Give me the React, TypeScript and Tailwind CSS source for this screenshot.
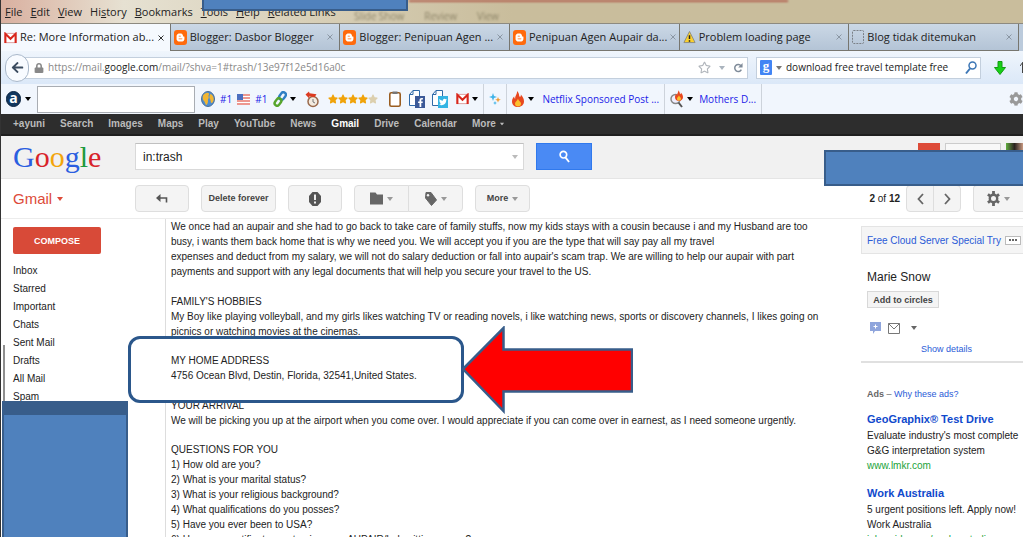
import React from "react";
import {
  FaArrowLeft,
  FaBloggerB,
  FaCog,
  FaFacebookF,
  FaFolder,
  FaLock,
  FaRegStar,
  FaStar,
  FaTag,
  FaTwitter,
} from "react-icons/fa";

const menuItems = [
  { before: "", key: "F", after: "ile" },
  { before: "", key: "E", after: "dit" },
  { before: "", key: "V", after: "iew" },
  { before: "Hi", key: "s", after: "tory" },
  { before: "", key: "B", after: "ookmarks" },
  { before: "", key: "T", after: "ools" },
  { before: "", key: "H", after: "elp" },
  { before: "", key: "R", after: "elated Links" },
];

const googleLinks = [
  "+ayuni",
  "Search",
  "Images",
  "Maps",
  "Play",
  "YouTube",
  "News",
  "Gmail",
  "Drive",
  "Calendar",
];

const folders = [
  "Inbox",
  "Starred",
  "Important",
  "Chats",
  "Sent Mail",
  "Drafts",
  "All Mail",
  "Spam",
];

const Caret: React.FC<{ className?: string }> = ({ className = "" }) => (
  <svg
    viewBox="0 0 6 4"
    className={`w-[6px] h-1 shrink-0 ${className}`}
    fill="currentColor"
  >
    <path d="M0 0h6L3 4z" />
  </svg>
);

const GmailIcon: React.FC = () => (
  <svg viewBox="0 0 14 12" className="w-[13px] h-3 shrink-0">
    <rect x="1" y="1" width="12" height="10" fill="#fff" stroke="#d99" />
    <path
      d="M1.5 11.5V1.5L7 6.8l5.5-5.3v10"
      fill="none"
      stroke="#d9271c"
      strokeWidth="2.2"
    />
  </svg>
);

const BloggerIcon: React.FC = () => (
  <span className="w-[13px] h-[15px] shrink-0 rounded-[3px] bg-[#ff6a0c] text-white flex items-center justify-center">
    <FaBloggerB size={9} />
  </span>
);

const WarningIcon: React.FC = () => (
  <svg viewBox="0 0 14 14" className="w-[13px] h-[14px] shrink-0">
    <path
      d="M7 1 13 13H1z"
      fill="#fbd02c"
      stroke="#8b8b80"
      strokeLinejoin="round"
    />
    <path d="M7 5v4.2M7 10.4v1.6" stroke="#222" strokeWidth="1.6" />
  </svg>
);

const BlankIcon: React.FC = () => (
  <svg viewBox="0 0 12 14" className="w-3 h-[14px] shrink-0">
    <rect
      x="0.5"
      y="0.5"
      width="11"
      height="13"
      rx="1"
      fill="none"
      stroke="#7b8087"
      strokeDasharray="2 1"
    />
  </svg>
);

const tabs = [
  { title: "Re: More Information ab...", icon: <GmailIcon />, active: true },
  { title: "Blogger: Dasbor Blogger", icon: <BloggerIcon /> },
  { title: "Blogger: Penipuan Agen ...", icon: <BloggerIcon /> },
  { title: "Penipuan Agen Aupair da...", icon: <BloggerIcon /> },
  { title: "Problem loading page", icon: <WarningIcon /> },
  { title: "Blog tidak ditemukan", icon: <BlankIcon /> },
];

const MenuBar: React.FC = () => (
  <div className="relative h-[23px] flex items-center bg-linear-to-r from-[#d9b0a0] via-[#e6e1d2] via-12% to-[#c9bd9c] to-50% overflow-hidden">
    <div className="absolute top-0 left-[408px] right-[23%] h-[2px] bg-[#b0604f] blur-[1px]" />
    <div className="absolute top-2 left-[353px] flex gap-5 text-[10px] leading-4 text-[#8d8468] blur-[1px]">
      <span>Slide Show</span>
      <span>Review</span>
      <span>View</span>
    </div>
    <nav className="relative flex gap-2 pl-1 text-[11px] leading-4 text-[#222]">
      {menuItems.map((m) => (
        <button key={m.key} className="whitespace-nowrap">
          {m.before}
          <span className="underline">{m.key}</span>
          {m.after}
        </button>
      ))}
    </nav>
    <div className="absolute top-0 left-[201px] w-[206px] h-[11px] bg-[#4f81bd] border-2 border-t-0 border-[#385d8a]" />
  </div>
);

const TabBar: React.FC = () => (
  <div className="grid grid-cols-6 pr-1 h-7 bg-[#bccbdc] border-t border-[#8d8a80]">
    {tabs.map((t) => (
      <button
        key={t.title}
        className={`flex items-center gap-[3px] min-w-0 pl-[3px] pr-[6px] text-[11px] text-[#222] border-r border-[#77766f] ${
          t.active
            ? "bg-[#f5f9fe]"
            : "bg-linear-to-b from-[#cbd8e6] to-[#b4c4d6] border-b"
        }`}
      >
        {t.icon}
        <span className="flex-1 text-left whitespace-nowrap">{t.title}</span>
        <svg
          viewBox="0 0 6 6"
          className={`w-[6px] h-[6px] shrink-0 ${
            t.active ? "text-[#333]" : "text-[#8a96a3]"
          }`}
        >
          <path d="M.5.5l5 5M5.5.5l-5 5" stroke="currentColor" />
        </svg>
      </button>
    ))}
  </div>
);

const AddressBar: React.FC = () => (
  <div className="h-[33px] flex items-center pl-1 bg-linear-to-b from-[#eff5fc] to-[#dbe8f8]">
    <button
      aria-label="Back"
      className="relative z-10 w-6 h-7 shrink-0 rounded-full border border-[#a9b8ca] bg-[#f8fbff] text-[#3b4c60] flex items-center justify-center"
    >
      <FaArrowLeft size={13} />
    </button>
    <div className="-ml-1 pl-2 pr-1 h-[22px] flex-1 min-w-0 flex items-center gap-1 bg-white border border-[#c3cfdd] text-[#888]">
      <FaLock size={10} className="shrink-0" />
      <div className="flex-1 text-[10px] whitespace-nowrap">
        https://mail.<span className="text-[#222]">google.com</span>
        /mail/?shva=1#trash/13e97f12e5d16a0c
      </div>
      <FaRegStar size={13} className="text-[#b0b5bb]" />
      <Caret className="mx-1 text-[#aab4be]" />
      <svg viewBox="0 0 12 12" className="w-[10px] h-3">
        <path
          d="M10 8a4.2 4.2 0 1 1-.4-4.6"
          fill="none"
          stroke="#7f8b99"
          strokeWidth="1.8"
        />
        <path d="M11.5 0v5.5H6.2z" fill="#7f8b99" />
      </svg>
    </div>
    <label className="ml-2 px-[3px] h-[22px] w-[225px] shrink-0 flex items-center gap-1 bg-white border border-[#c3cfdd]">
      <span className="w-3 h-[15px] bg-[#4285f4] rounded-[1px] text-white font-bold text-[13px] leading-[12px] text-center font-['Liberation_Serif',serif]">
        g
      </span>
      <Caret className="text-[#777]" />
      <input
        aria-label="Search the web"
        defaultValue="download free travel template free"
        className="flex-1 min-w-0 text-[10px] text-[#222] outline-none"
      />
      <svg viewBox="0 0 12 14" className="w-3 h-[14px]">
        <circle
          cx="7.5"
          cy="4.5"
          r="3.5"
          fill="none"
          stroke="#3c76b5"
          strokeWidth="1.5"
        />
        <path d="M5 7.5 1 12.5" stroke="#3c76b5" strokeWidth="2" />
      </svg>
    </label>
    <div className="w-[42px] shrink-0 flex items-center justify-between pl-[13px] overflow-hidden">
      <svg viewBox="0 0 12 14" className="w-3 h-[14px]">
        <path
          d="M4 .5h4v6h3.5L6 13.5.5 6.5H4z"
          fill="#17d017"
          stroke="#129c12"
        />
      </svg>
      <svg viewBox="0 0 3 12" className="w-[3px] h-3">
        <path d="M0 4l3-4M2.5 1v10" stroke="#444" />
      </svg>
    </div>
  </div>
);

const Flame: React.FC<{ className?: string }> = ({ className = "" }) => (
  <svg viewBox="0 0 12 16" className={`shrink-0 ${className}`}>
    <path
      d="M5 0c3 3 1.5 5 3 6 .8-.3 1-1.5.8-2.4C11 6 12 8 12 10.5c0 3-2.5 5.5-6 5.5s-6-2-6-5.5C0 8 1.2 6.5 2.2 5.5c0 1.5.4 2 1 2.2C3 4.5 5.5 3 5 0z"
      fill="#e8481f"
    />
    <path
      d="M6 7.5c.3 2.5 3 3 3 5.3 0 1.7-1.3 2.7-3 2.7s-3-1-3-2.8C3 10.5 5.5 10 6 7.5z"
      fill="#fbc02d"
    />
  </svg>
);

const PageIcon: React.FC<{ children: React.ReactNode; badge: string }> = ({
  children,
  badge,
}) => (
  <span className="relative w-4 h-[18px] shrink-0">
    <svg viewBox="0 0 16 18" className="w-4 h-[18px]">
      <path
        d="M.5 4.5 4 .5h6.5v15H.5zM4 .5v4H.5"
        fill="#fff"
        stroke="#2f6aa8"
      />
    </svg>
    <span
      className={`absolute right-0 bottom-0 w-[10px] h-3 text-white flex items-center justify-center ${badge}`}
    >
      {children}
    </span>
  </span>
);

const AlexaBar: React.FC = () => (
  <div className="h-[30px] flex items-center pl-[5px] bg-[#f1f6fd] text-[10px] text-[#1c1ce8] overflow-hidden">
    <span className="w-[15px] h-4 shrink-0 rounded-full bg-[#12375f] border border-[#0a2340] text-white text-[14px] leading-[12px] font-bold text-center">
      a
    </span>
    <Caret className="ml-1 text-black" />
    <input
      aria-label="Alexa search"
      className="ml-[6px] w-[158px] h-[27px] shrink-0 bg-white border border-[#a9adb3]"
    />
    <svg viewBox="0 0 14 16" className="ml-[6px] w-[14px] h-4 shrink-0">
      <ellipse cx="7" cy="8" rx="6.5" ry="7.5" fill="#4f8ccf" stroke="#4a6f96" />
      <path
        d="M2 4.5C4 1.5 7 1 8 2.5 8.5 4 7 4 7.5 5.5 8.5 7 6.5 8 7 10c0 2-1 4-2 4C4 12 4 11 3 10 1.500 9 1.500 6 2 4.500zM9.500 3c2 .5 3.200 3 3.200 5S11.500 12 10.500 12 10 9 9 8s-.5-4 .5-5z"
        fill="#f2b632"
      />
    </svg>
    <a href="#rank" className="ml-[5px]">
      #1
    </a>
    <svg viewBox="0 0 13 11" className="ml-[5px] w-[13px] h-[11px] shrink-0">
      <rect width="13" height="11" fill="#fff" />
      <path d="M0 1h13M0 4h13M0 7h13M0 10h13" stroke="#e8776c" strokeWidth="1.5" />
      <rect width="6" height="6" fill="#4c6fc0" />
    </svg>
    <a href="#rank-us" className="ml-[5px]">
      #1
    </a>
    <svg
      viewBox="0 0 14 16"
      className="ml-[6px] w-[14px] h-4 shrink-0"
      fill="none"
      strokeWidth="2.4"
    >
      <rect x="7" y="1" width="5" height="8" rx="2.5" transform="rotate(35 9.5 5)" stroke="#2f7fc4" />
      <rect x="2.5" y="7" width="5" height="8" rx="2.5" transform="rotate(35 5 11)" stroke="#57a52c" />
    </svg>
    <Caret className="ml-[3px] text-black" />
    <svg viewBox="0 0 14 17" className="ml-[9px] w-[14px] h-[17px] shrink-0">
      <circle cx="8" cy="10.5" r="5" fill="#f3ebe0" stroke="#9a6a4c" strokeWidth="1.5" />
      <path d="M8 8v3l2 1" stroke="#777" fill="none" />
      <path d="M.5 3.5 4 .5l.5 1.8 7 1-2 3-5-1-.5 2z" fill="#dc3a20" />
    </svg>
    <span className="ml-[9px] flex shrink-0 text-[#f0a30a]">
      {[1, 2, 3, 4].map((n) => (
        <FaStar key={n} size={10} />
      ))}
      <FaStar size={10} className="text-[#dccfae]" />
    </span>
    <svg viewBox="0 0 12 16" className="ml-[11px] w-3 h-4 shrink-0">
      <rect x=".8" y="1.8" width="10.4" height="13.4" rx="1.5" fill="#fff" stroke="#9a5d20" strokeWidth="1.6" />
      <path d="M3.5.5h5V3h-5z" fill="#777" />
    </svg>
    <span className="ml-2 flex gap-[7px]">
      <PageIcon badge="bg-[#3b5998]">
        <FaFacebookF size={9} />
      </PageIcon>
      <PageIcon badge="bg-[#33b4e4]">
        <FaTwitter size={8} />
      </PageIcon>
    </span>
    <span className="ml-2 flex items-center gap-[3px]">
      <GmailIcon />
      <Caret className="text-black" />
    </span>
    <span className="ml-[5px] px-[5px] h-full flex items-center border-x border-[#cdd3db]">
      <svg viewBox="0 0 12 14" className="w-3 h-[14px]">
        <path d="M4 1l1 3 3 1-3 1-1 3-1-3-3-1 3-1z" fill="#3fb3e8" />
        <path d="M9 5l.8 2 2 .8-2 .8-.8 2-.8-2-2-.8 2-.8z" fill="#f29a2e" />
        <path d="M6 9l.6 1.4 1.4.6-1.4.6L6 13l-.6-1.4L4 11l1.4-.6z" fill="#3fb3e8" />
      </svg>
    </span>
    <span className="px-[5px] h-full flex items-center border-r border-[#cdd3db] whitespace-nowrap">
      <Flame className="w-3 h-4" />
      <Caret className="ml-1 text-black" />
      <a href="#netflix" className="ml-2">
        Netflix Sponsored Post ...
      </a>
    </span>
    <span className="px-[5px] h-full flex items-center border-r border-[#cdd3db] whitespace-nowrap">
      <span className="relative w-[13px] h-[18px] shrink-0">
        <svg viewBox="0 0 13 18" className="w-[13px] h-[18px]">
          <circle cx="5.5" cy="9" r="4.5" fill="#eef" stroke="#888" strokeWidth="1.5" />
          <path d="M8.5 12.5 12 17" stroke="#555" strokeWidth="2" />
        </svg>
        <Flame className="absolute right-0 top-0 w-2 h-[11px]" />
      </span>
      <Caret className="ml-1 text-black" />
      <a href="#mothers" className="ml-[6px]">
        Mothers D...
      </a>
    </span>
    <FaCog size={14} className="ml-auto shrink-0 text-[#999]" />
  </div>
);

const GoogleNav: React.FC = () => (
  <nav className="h-[22px] flex items-center gap-[15px] pl-3 bg-[#2d2d2d] border-b-2 border-[#1f1f1f] text-[10px] leading-4 font-bold text-[#bbb]">
    {googleLinks.map((name) => (
      <a
        key={name}
        href={`#${name}`}
        className={name === "Gmail" ? "text-white" : ""}
      >
        {name}
      </a>
    ))}
    <button className="flex items-center gap-[3px]">
      More <Caret className="scale-75" />
    </button>
  </nav>
);

const SearchHeader: React.FC = () => (
  <header className="relative h-[43px] flex items-start pt-[7px] bg-[#f1f1f1] border-b border-[#e5e5e5]">
    <a
      href="#google"
      className="w-[134px] shrink-0 pl-3 font-['Liberation_Serif',serif] text-[30px] leading-[28px]"
    >
      <span className="text-[#2a5ee0]">G</span>
      <span className="text-[#d8232a]">o</span>
      <span className="text-[#f3a50c]">o</span>
      <span className="text-[#2a5ee0]">g</span>
      <span className="text-[#1c9a3c]">l</span>
      <span className="text-[#d8232a]">e</span>
    </a>
    <label className="w-[389px] h-[27px] flex items-center pl-[7px] pr-[5px] bg-white border border-[#d9d9d9] border-t-[#c0c0c0]">
      <input
        aria-label="Search mail"
        defaultValue="in:trash"
        className="flex-1 min-w-0 text-[12px] text-[#222] outline-none"
      />
      <Caret className="text-[#bbb]" />
    </label>
    <button
      aria-label="Search"
      className="ml-3 w-[56px] h-[27px] flex items-center justify-center border border-[#3079ed] bg-[#4a8af4]"
    >
      <svg viewBox="0 0 12 14" className="w-[11px] h-[13px]">
        <circle cx="4.8" cy="5" r="3.6" fill="none" stroke="#fff" strokeWidth="1.8" />
        <path d="M7 8l4 5" stroke="#fff" strokeWidth="2" />
      </svg>
    </button>
    <div className="ml-auto flex gap-[5px]">
      <span className="w-[22px] h-6 bg-[#dd4b39]" />
      <span className="w-[56px] h-6 bg-[#f8f8f8] border border-[#ccc]" />
      <span className="w-[17px] h-6 bg-linear-to-r from-[#5fae3c] via-[#2a2320] to-[#c99a82]" />
    </div>
    <div className="absolute z-20 top-[14px] right-0 w-[199px] h-[36px] bg-[#4f81bd] border-2 border-r-0 border-[#385d8a]" />
  </header>
);

const ToolButton: React.FC<{
  label: string;
  className?: string;
  children: React.ReactNode;
}> = ({ label, className = "", children }) => (
  <button
    aria-label={label}
    className={`h-[27px] flex items-center justify-center gap-1 whitespace-nowrap bg-[#f4f4f4] border border-[#dedede] ${className}`}
  >
    {children}
  </button>
);

const Toolbar: React.FC = () => (
  <div className="h-10 flex items-center border-b border-[#ececec] text-[9px] font-bold text-[#444]">
    <button className="w-[134px] shrink-0 pl-3 flex items-center gap-[5px] text-[15px] leading-6 font-normal text-[#dd4b39]">
      Gmail <Caret />
    </button>
    <ToolButton label="Back to Trash" className="w-[54px] rounded-sm">
      <svg viewBox="0 0 12 9" className="w-3 h-[9px]" fill="none">
        <path d="M2 4h8.5v4.5" stroke="#555" strokeWidth="1.6" />
        <path d="M4.5 0v8L0 4z" fill="#555" />
      </svg>
    </ToolButton>
    <ToolButton label="Delete forever" className="ml-3 w-[75px] rounded-sm">
      Delete forever
    </ToolButton>
    <ToolButton label="Report spam" className="ml-3 w-[54px] rounded-sm">
      <svg viewBox="0 0 12 14" className="w-3 h-[14px]">
        <path d="M3.5 0h5L12 4v6l-3.5 4h-5L0 10V4z" fill="#555" />
        <path d="M6 2.5V8M6 9.5v2" stroke="#fff" strokeWidth="1.8" />
      </svg>
    </ToolButton>
    <ToolButton label="Move to" className="ml-3 w-[55px] rounded-l-sm">
      <svg viewBox="0 0 13 13" className="w-[13px] h-[13px]">
        <path d="M0 .5h5.5L7 2.5h6v10H0z" fill="#666" />
      </svg>
      <Caret className="text-[#999]" />
    </ToolButton>
    <ToolButton label="Labels" className="-ml-px w-[55px] rounded-r-sm">
      <svg viewBox="0 0 12 14" className="w-3 h-[14px]">
        <path
          d="M1 .5h5l5.5 7.500-5 5.500L.5 6z"
          fill="#666"
          stroke="#666"
          strokeLinejoin="round"
        />
        <circle cx="3" cy="3.2" r="1.2" fill="#f4f4f4" />
      </svg>
      <Caret className="text-[#999]" />
    </ToolButton>
    <ToolButton label="More" className="ml-3 w-[55px] rounded-sm">
      More <Caret className="text-[#999]" />
    </ToolButton>
    <span className="ml-auto mr-[6px] text-[10px] font-normal whitespace-nowrap text-[#222]">
      <b>2</b> of <b>12</b>
    </span>
    <ToolButton label="Newer" className="w-7 rounded-l-sm">
      <svg viewBox="0 0 7 12" className="w-[7px] h-3">
        <path d="M6 1 1.5 6 6 11" fill="none" stroke="#666" strokeWidth="1.8" />
      </svg>
    </ToolButton>
    <ToolButton label="Older" className="-ml-px w-7 rounded-r-sm">
      <svg viewBox="0 0 7 12" className="w-[7px] h-3">
        <path d="M1 1l4.5 5L1 11" fill="none" stroke="#666" strokeWidth="1.8" />
      </svg>
    </ToolButton>
    <ToolButton label="Settings" className="ml-3 w-[50px] border-r-0 rounded-l-sm">
      <svg viewBox="0 0 14 16" className="w-[13px] h-[15px]" stroke="#666">
        <path d="M7 0v16M1 3.5l12 9M13 3.5l-12 9" strokeWidth="3" />
        <circle cx="7" cy="8" r="4" fill="#f4f4f4" strokeWidth="2.6" />
      </svg>
      <Caret className="text-[#999]" />
    </ToolButton>
  </div>
);

const Sidebar: React.FC = () => (
  <aside className="relative w-[164px] shrink-0 pl-3 text-[10px] leading-[18px] text-[#222]">
    <button className="block mt-2 w-[88px] h-[27px] rounded-xs bg-[#d84a38] text-white text-[9px] font-bold">
      COMPOSE
    </button>
    <ul className="mt-2">
      {folders.map((name) => (
        <li key={name}>
          <a href={`#${name}`}>{name}</a>
        </li>
      ))}
    </ul>
    <div className="absolute top-[126px] left-[2px] w-[2px] h-14 bg-[#8f8f8f]" />
    <div className="absolute top-[182px] bottom-0 left-[1px] w-[126px] bg-[#4f81bd] border-x-2 border-t-[14px] border-[#385d8a]" />
  </aside>
);

const Message: React.FC = () => (
  <article className="relative flex-1 min-w-0 pl-[5px] border-l border-[#ddd] text-[10px] leading-[15px] whitespace-nowrap text-[#222]">
    <p>
      We once had an aupair and she had to go back to take care of family
      stuffs, now my kids stays with a cousin because i and my Husband are too
      <br />
      busy, i wants them back home that is why we need you. We will accept you
      if you are the type that will say pay all my travel
      <br />
      expenses and deduct from my salary, we will not do salary deduction or
      fall into aupair's scam trap. We are willing to help our aupair with part
      <br />
      payments and support with any legal documents that will help you secure
      your travel to the US.
    </p>
    <p className="mt-[15px]">
      FAMILY'S HOBBIES
      <br />
      My Boy like playing volleyball, and my girls likes watching TV or reading
      novels, i like watching news, sports or discovery channels, I likes going
      on
      <br />
      picnics or watching movies at the cinemas.
    </p>
    {/* callout sits over the neighbouring lines but under the address */}
    <div className="absolute top-[117px] -left-[38px] w-[336px] h-[67px] rounded-xl bg-white border-3 border-[#2b578b]" />
    <p className="relative mt-[14px]">
      MY HOME ADDRESS
      <br />
      4756 Ocean Blvd, Destin, Florida, 32541,United States.
    </p>
    <p className="mt-[15px]">
      YOUR ARRIVAL
      <br />
      We will be picking you up at the airport when you come over. I would
      appreciate if you can come over in earnest, as I need someone urgently.
    </p>
    <p className="mt-[14px]">QUESTIONS FOR YOU</p>
    <ol>
      <li>1) How old are you?</li>
      <li>2) What is your marital status?</li>
      <li>3) What is your religious background?</li>
      <li>4) What qualifications do you posses?</li>
      <li>5) Have you ever been to USA?</li>
      <li>6) Have you certificates portraying your AUPAIR/babysitting career?</li>
    </ol>
    <svg
      viewBox="0 0 172 88"
      className="absolute top-[107px] left-[295px] w-[172px] h-[88px]"
    >
      <path
        d="M2 43 42.500 2v21.500H171v42H42.500V85z"
        fill="#f00"
        stroke="#385d8a"
        strokeWidth="2.5"
      />
    </svg>
  </article>
);

const Ad: React.FC<{ title: string; lines: string[]; url: string }> = ({
  title,
  lines,
  url,
}) => (
  <div className="mb-3 pl-[6px] text-[10px] leading-[15px] whitespace-nowrap">
    <a
      href={`#${url}`}
      className="block text-[11px] leading-[17px] font-bold text-[#1049cc]"
    >
      {title}
    </a>
    {lines.map((line) => (
      <p key={line}>{line}</p>
    ))}
    <a href={`#${url}`} className="block text-[#1ba33a]">
      {url}
    </a>
  </div>
);

const RightPanel: React.FC = () => (
  <aside className="w-[162px] shrink-0 pt-[7px] text-[#222] whitespace-nowrap">
    <div className="h-7 pl-[5px] pr-[2px] flex items-center justify-between bg-[#f5f5f5] border border-r-0 border-[#e4e4e4]">
      <a href="#cloud" className="text-[10px] text-[#2a5bd7]">
        Free Cloud Server Special Try
      </a>
      <button
        aria-label="More ads"
        className="w-4 h-[9px] border border-[#bbb] bg-white flex items-center justify-center gap-px"
      >
        <i className="w-[2px] h-[2px] bg-[#666]" />
        <i className="w-[2px] h-[2px] bg-[#666]" />
        <i className="w-[2px] h-[2px] bg-[#666]" />
      </button>
    </div>
    <div className="pl-[6px] border-b-2 border-[#e0e0e0] h-[109px]">
      <h2 className="pt-[14px] text-[12px] leading-[18px]">Marie Snow</h2>
      <button className="block mt-[5px] w-[72px] h-[17px] bg-[#f4f4f4] border border-[#d8d8d8] text-[9px] leading-[14px] font-bold text-[#444]">
        Add to circles
      </button>
      <div className="mt-[14px] ml-[3px] flex items-center gap-[7px]">
        <svg viewBox="0 0 11 12" className="w-[11px] h-3">
          <path d="M0 0h11v9H5l-2 3V9H0z" fill="#8fa5dc" />
          <path d="M5.5 2.5v4M3.5 4.5h4" stroke="#fff" />
        </svg>
        <svg viewBox="0 0 12 11" className="w-3 h-[11px]">
          <path d="M.5.5h11v10H.5zM.5.5 6 6 11.5.5" fill="none" stroke="#777" />
        </svg>
        <Caret className="ml-1 text-[#666]" />
      </div>
      <a
        href="#details"
        className="block mt-2 pl-[54px] text-[9px] leading-[15px] text-[#2a5bd7]"
      >
        Show details
      </a>
    </div>
    <p className="mt-[23px] mb-[9px] pl-[6px] text-[9px] leading-4 text-[#666]">
      <b>Ads</b> –{" "}
      <a href="#why" className="text-[#2a5bd7]">
        Why these ads?
      </a>
    </p>
    <Ad
      title="GeoGraphix® Test Drive"
      lines={["Evaluate industry's most complete", "G&G interpretation system"]}
      url="www.lmkr.com"
    />
    <Ad
      title="Work Australia"
      lines={["5 urgent positions left. Apply now!", "Work Australia"]}
      url="jobrapido.com/workaustralia"
    />
  </aside>
);

const App: React.FC = () => (
  <div className="h-screen flex flex-col overflow-hidden bg-white border-l border-[#333] font-['Liberation_Sans',sans-serif]">
    <div className="shrink-0 font-['Open_Sans',sans-serif]">
      <MenuBar />
      <TabBar />
      <AddressBar />
      <AlexaBar />
    </div>
    <div className="shrink-0">
      <GoogleNav />
      <SearchHeader />
      <Toolbar />
    </div>
    <main className="flex-1 min-h-0 flex overflow-hidden">
      <Sidebar />
      <Message />
      <RightPanel />
    </main>
  </div>
);

export default App;
